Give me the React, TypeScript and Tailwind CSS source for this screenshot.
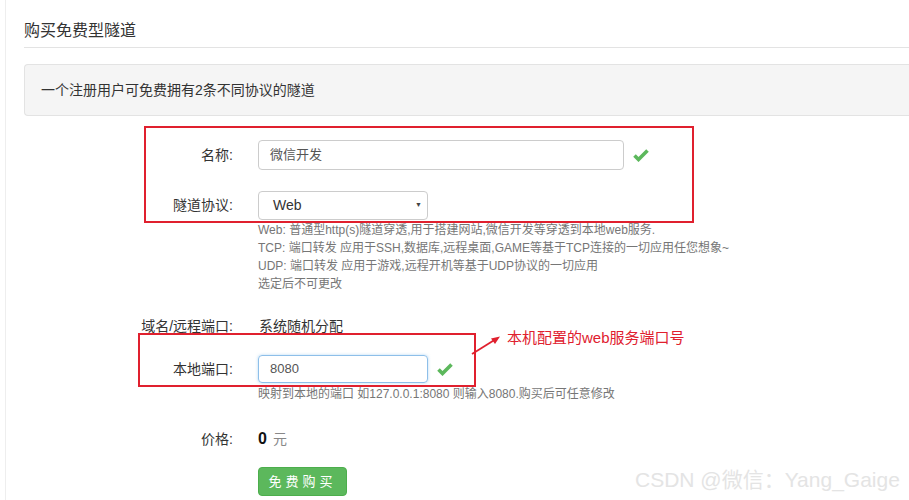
import React from "react";

const font = { fontFamily: '"Liberation Sans", "Noto Sans CJK SC", sans-serif' };

function Check({ className }: { className?: string }) {
  return (
    <svg className={className} width="16" height="14" viewBox="0 0 16 14">
      <path d="M1.5 7.5 L5.5 11.5 L14.5 2.5" fill="none" stroke="#5cb85c" strokeWidth="3.6" strokeLinejoin="miter" />
    </svg>
  );
}

function Label({ children }: { children: React.ReactNode }) {
  return <div className="w-[209px] shrink-0 text-right text-[14px] text-[#333]">{children}</div>;
}

export default function App() {
  return (
    <div className="relative h-[500px] w-[909px] overflow-hidden bg-white" style={font}>
      <div className="absolute left-[5px] top-0 h-full w-px bg-[#eeeeee]" />
      <div className="relative pl-[24px]">
        <div className="pt-[20px] text-[16px] leading-[22px] text-[#333]">购买免费型隧道</div>
        <div className="mt-[5px] h-px bg-[#e3e3e3]" />
        <div className="mt-[16px] flex h-[52px] items-center rounded-l-[4px] border border-r-0 border-[#e3e3e3] bg-[#f5f5f5] pl-[16px] text-[14px] text-[#333]">
          一个注册用户可免费拥有2条不同协议的隧道
        </div>

        <div className="mt-[24px] flex h-[30px] items-center">
          <Label>名称:</Label>
          <div className="ml-[25px] flex h-[30px] w-[366px] items-center rounded-[4px] border border-[#cccccc] pl-[11px] text-[13px] text-[#555]">
            微信开发
          </div>
          <Check className="ml-[9px]" />
        </div>

        <div className="mt-[21px] flex h-[29px] items-center">
          <Label>隧道协议:</Label>
          <div className="ml-[25px] flex h-[29px] w-[170px] items-center justify-between rounded-[4px] border border-[#cccccc] pl-[14px] pr-[5px] text-[14px] text-[#333]">
            <span>Web</span>
            <span className="text-[7px] text-[#444]">▼</span>
          </div>
        </div>

        <div className="ml-[234px] mt-px text-[12px] leading-[18px] text-[#767676]">
          <div>Web: 普通型http(s)隧道穿透,用于搭建网站,微信开发等穿透到本地web服务.</div>
          <div>TCP: 端口转发 应用于SSH,数据库,远程桌面,GAME等基于TCP连接的一切应用任您想象~</div>
          <div>UDP: 端口转发 应用于游戏,远程开机等基于UDP协议的一切应用</div>
          <div>选定后不可更改</div>
        </div>

        <div className="mt-[23px] flex h-[20px] items-center">
          <Label>域名/远程端口:</Label>
          <div className="ml-[26px] text-[14px] text-[#333]">系统随机分配</div>
        </div>

        <div className="mt-[19px] flex h-[28px] items-center">
          <Label>本地端口:</Label>
          <div className="ml-[25px] flex h-[28px] w-[170px] items-center rounded-[4px] border border-[#8ebfe9] pl-[11px] text-[13px] text-[#555] shadow-[0_0_3px_rgba(102,175,233,0.5)]">
            8080
          </div>
          <Check className="ml-[9px]" />
        </div>

        <div className="ml-[234px] mt-[2px] text-[12px] leading-[18px] text-[#767676]">
          映射到本地的端口 如127.0.0.1:8080 则输入8080.购买后可任意修改
        </div>

        <div className="mt-[26px] flex h-[20px] items-center">
          <Label>价格:</Label>
          <div className="ml-[25px] flex items-baseline gap-[6px]">
            <span className="text-[16px] font-bold text-[#111]">0</span>
            <span className="text-[14px] text-[#888]">元</span>
          </div>
        </div>

        <div className="mt-[18px] flex">
          <div className="ml-[234px] flex h-[29px] w-[89px] items-center justify-center rounded-[4px] border border-[#4cae4c] bg-[#5cb85c] text-[13px] tracking-[4px] text-white">
            免费购买
          </div>
        </div>
      </div>

      {/* annotations */}
      <div className="absolute left-[144px] top-[126px] h-[97px] w-[550px] border-2 border-[#e0202e]" />
      <div className="absolute left-[138px] top-[333px] h-[54px] w-[338px] border-2 border-[#e0202e]" />
      <svg className="absolute left-[465px] top-[330px]" width="40" height="30" viewBox="0 0 40 30">
        <path d="M7 24 L31 9" stroke="#e0202e" strokeWidth="1.8" fill="none" />
        <path d="M35 6.5 L26 8.5 L30 14 Z" fill="#e0202e" />
      </svg>
      <div className="absolute left-[507px] top-[328px] text-[15px] leading-[20px] text-[#e0202e]">本机配置的web服务端口号</div>

      <div className="absolute left-[635px] top-[467px] text-[21px] leading-[26px] text-[#e4e4e4]">CSDN @微信：Yang_Gaige</div>
    </div>
  );
}
